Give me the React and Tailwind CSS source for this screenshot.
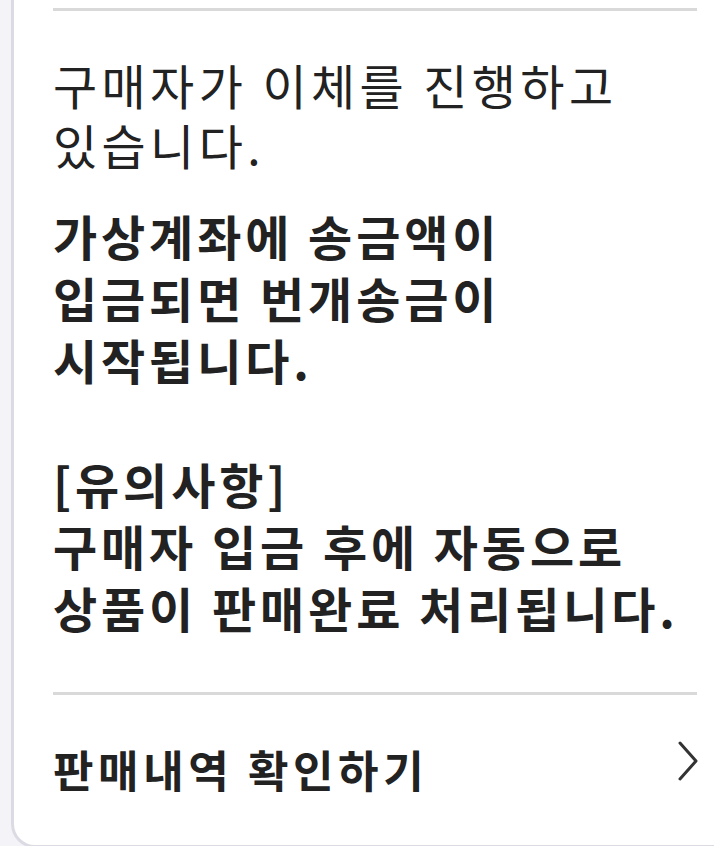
import React from 'react';

const KR = "font-['Noto_Sans_CJK_KR','Noto_Sans',sans-serif]";

const Divider = () => <div className="h-[3px] w-full bg-[#d9d9d9]" />;

export default function App() {
  return (
    <div className={`h-[846px] w-full overflow-hidden bg-[#f3f3f8] pl-[11px] ${KR}`}>
      <div className="w-[728px] rounded-b-[24px] border-x-[3px] border-b-[3px] border-[#dcdbe4] bg-white px-[39px] pt-[8px]">
        <Divider />

        <p className="mt-[43px] text-[48px] leading-[60px] font-normal tracking-[4.4px] text-[#222]">
          구매자가 이체를 진행하고
          <br />
          있습니다.
        </p>

        <p className="mt-[30px] text-[48px] leading-[62px] font-bold tracking-[3.9px] text-[#222]">
          가상계좌에 송금액이
          <br />
          입금되면 번개송금이
          <br />
          시작됩니다.
          <br />
          <br />
          [유의사항]
          <br />
          구매자 입금 후에 자동으로
          <br />
          상품이 판매완료 처리됩니다.
        </p>

        <div className="mt-[54px]">
          <Divider />
        </div>

        <button className="flex h-[150px] w-full items-center justify-between pb-[2px] text-left">
          <span className="text-[44px] font-semibold tracking-[4.6px] text-[#222]">판매내역 확인하기</span>
          <svg width="20" height="40" viewBox="0 0 20 40" className="mr-[-1px] mb-[16px]">
            <polyline points="2,2 18,20 2,38" fill="none" stroke="#333" strokeWidth="3" strokeLinecap="round" strokeLinejoin="round" />
          </svg>
        </button>
      </div>
    </div>
  );
}
